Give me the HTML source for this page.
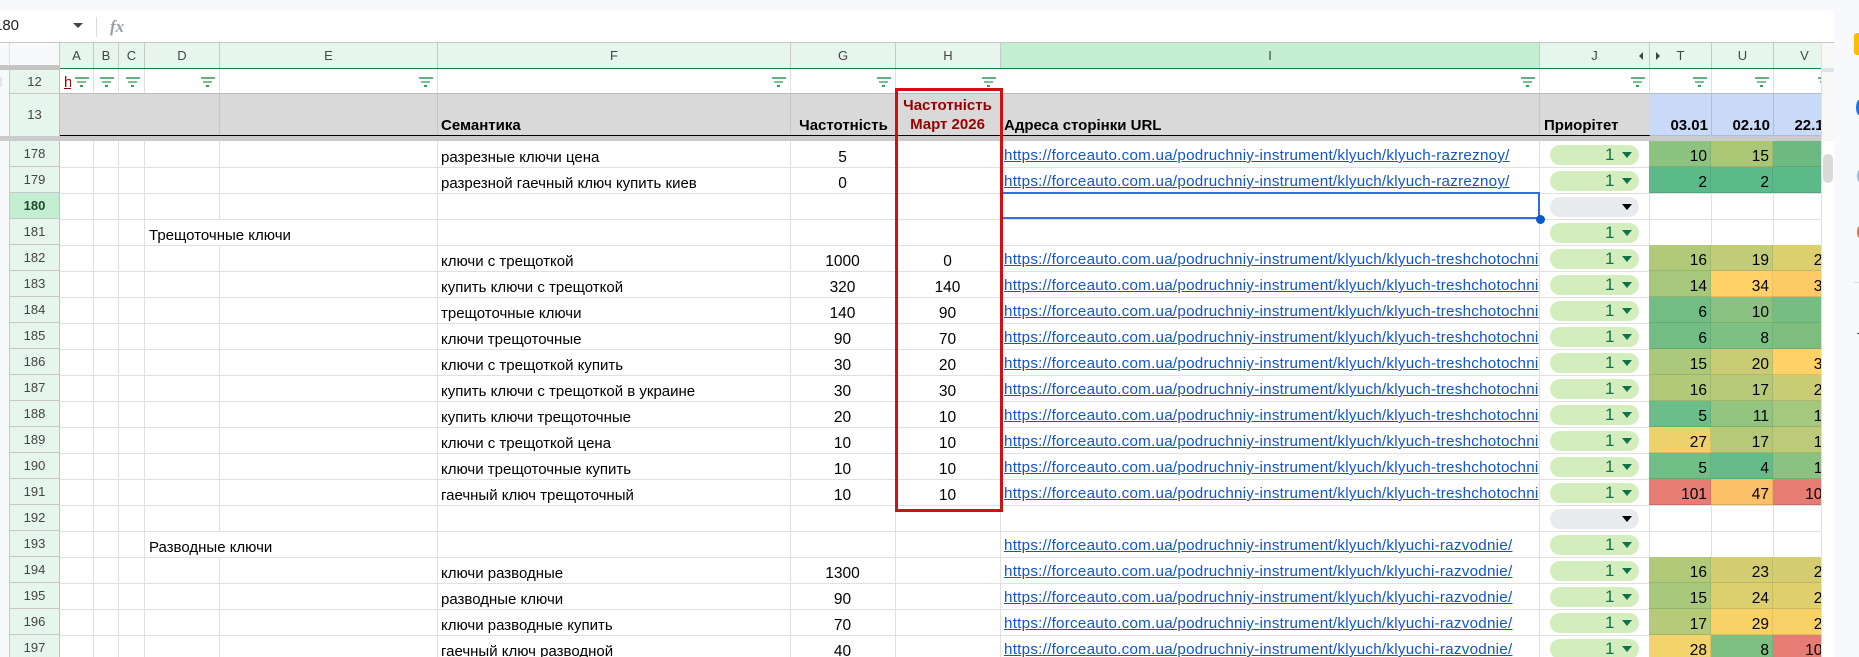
<!DOCTYPE html>
<html><head><meta charset="utf-8"><style>
html,body{margin:0;padding:0;background:#f8f9fd}
body{width:1859px;height:657px;overflow:hidden;position:relative;font-family:"Liberation Sans",Arial,sans-serif;color:#000}
div,a{position:absolute;white-space:nowrap;display:block}
#sheet{left:0;top:10px;width:1834px;height:647px;background:#fff}
#g{left:0;top:0;width:1821px;height:657px;overflow:hidden}
.hc{top:43px;height:25px;background:#e7f6ed;border-right:1px solid #c7c7c7;text-align:center;font-size:13px;line-height:25px;color:#444;box-sizing:border-box}
.fl{top:74px;width:14px;height:10px}
.fl:before{content:"";position:absolute;left:0;top:3px;width:14px;height:2px;background:#62b07f}
.fl:after{content:"";position:absolute;left:2px;top:7px;width:9px;height:2px;background:#7cc092}
.fd{top:85px;width:3px;height:2px;background:#3c9a5e}
.r{left:60px;width:1761px;height:26px;box-sizing:border-box;border-bottom:1px solid #e0e0e0}
.n{left:-60px;width:60px;height:26px}
.n div{left:9px;top:-1px;width:51px;height:26px;box-sizing:border-box;background:#e7f6ed;border-left:1px solid #c8c8c8;border-right:1px solid #c0c0c0;border-bottom:1px solid #c7c7c7;text-align:center;font-size:13px;line-height:26px;color:#444}
.f{left:381px;top:4px;font-size:15px;line-height:24px}
.d{left:88px;top:0;font-size:15px;line-height:32px;background:#fff;padding:0 4px 0 1px;width:280px;height:25px;overflow:hidden}
.g,.h{top:4px;font-size:15.5px;line-height:24px;text-align:center}
.g{left:730px;width:105px}
.h{left:835px;width:105px}
.u{left:944px;top:2px;width:535.5px;height:23px;overflow:hidden;font-size:15.2px;line-height:24px;color:#1155cc;text-decoration:underline;letter-spacing:.25px}
.p{left:1490px;top:3px;width:89px;height:20px;border-radius:10px;background:#d4edbc;color:#11734b;font-size:17px;line-height:20px}
.p span{position:absolute;left:55px;top:0}
.p:after{content:"";position:absolute;left:72px;top:7px;border-left:5px solid transparent;border-right:5px solid transparent;border-top:6px solid #11734b}
.p.e{background:#e8eaed}
.p.e:after{border-top-color:#000}
.t{top:-1px;height:26px;box-sizing:border-box;font-size:15.5px;line-height:32px;text-align:right;padding-right:3px;border-right:1px solid rgba(0,0,0,.08);border-bottom:1px solid rgba(0,0,0,.1);overflow:hidden}
.t1{left:1589px;width:62px}
.t2{left:1651px;width:62px}
.t3{left:1713px;width:62px}
.v{width:1px;background:#e0e0e0;top:141px;height:516px}
.b{font-weight:bold;font-size:15px;line-height:18px;top:117px}
</style></head><body>
<div style="left:0;top:0;width:1859px;height:10px;background:#f8f9fd"></div>
<div id="sheet"></div>
<div style="left:-6px;top:16px;font-size:15px;line-height:20px;color:#222">180</div>
<div style="left:73px;top:23px;border-left:5px solid transparent;border-right:5px solid transparent;border-top:5px solid #444"></div>
<div style="left:96px;top:17px;width:1px;height:20px;background:#dadce0"></div>
<div style="left:110px;top:17px;font:italic bold 17px/20px 'Liberation Serif',serif;color:#9aa0a6">fx</div>
<div style="left:0;top:42px;width:1834px;height:1px;background:#c7c7c7"></div>
<div style="left:1821px;top:43px;width:13px;height:98px;background:#f8f8f8"></div>
<div style="left:1821px;top:68px;width:13px;height:4px;background:#e0e3e8"></div>
<div style="left:1821px;top:43px;width:1px;height:614px;background:#e0e0e0"></div>
<div style="left:1823px;top:154px;width:10px;height:29px;border-radius:5px;background:#dadada"></div>
<div style="left:0;top:43px;width:9px;height:614px;background:#f8f9fa"></div>
<div style="left:0;top:77px;width:2px;height:10px;background:#e4e4e4"></div>
<div style="left:9px;top:43px;width:1px;height:22px;background:#e0e0e0"></div>
<div id="g">
<div class="v" style="left:93px"></div><div class="v" style="left:118px"></div><div class="v" style="left:144px"></div><div class="v" style="left:219px"></div><div class="v" style="left:437px"></div><div class="v" style="left:790px"></div><div class="v" style="left:895px"></div><div class="v" style="left:1000px"></div><div class="v" style="left:1539px"></div><div class="v" style="left:1649px"></div><div class="v" style="left:1711px"></div><div class="v" style="left:1773px"></div>
<div style="left:10px;top:43px;width:50px;height:22px;background:#f8f9fa;border-right:1px solid #c7c7c7;box-sizing:border-box"></div>
<div style="left:0;top:65px;width:60px;height:5px;background:#c4c4c4"></div>
<div class="hc" style="left:60px;width:34px">A</div><div class="hc" style="left:94px;width:25px">B</div><div class="hc" style="left:119px;width:26px">C</div><div class="hc" style="left:145px;width:75px">D</div><div class="hc" style="left:220px;width:218px">E</div><div class="hc" style="left:438px;width:353px">F</div><div class="hc" style="left:791px;width:105px">G</div><div class="hc" style="left:896px;width:105px">H</div><div class="hc" style="left:1001px;width:539px;background:#c3eed1">I</div><div class="hc" style="left:1540px;width:110px">J</div><div class="hc" style="left:1650px;width:62px">T</div><div class="hc" style="left:1712px;width:62px">U</div><div class="hc" style="left:1774px;width:62px">V</div>
<div style="left:1639px;top:52px;border-top:4px solid transparent;border-bottom:4px solid transparent;border-right:4px solid #444"></div>
<div style="left:1656px;top:52px;border-top:4px solid transparent;border-bottom:4px solid transparent;border-left:4px solid #444"></div>
<div style="left:60px;top:68px;width:1761px;height:1px;background:#188038"></div>
<!-- row 12 -->
<div style="left:9px;top:70px;width:51px;height:23px;box-sizing:border-box;background:#e7f6ed;border-left:1px solid #c8c8c8;border-right:1px solid #c0c0c0;text-align:center;font-size:13px;line-height:23px;color:#444">12</div>
<div style="left:64px;top:73px;width:7px;height:18px;overflow:hidden;font-size:15px;line-height:19px;color:#980000;text-decoration:underline">http</div>
<div style="left:60px;top:69px;width:1761px;height:24px;z-index:0">
<div style="left:33px;top:0;width:1px;height:24px;background:#e0e0e0"></div><div style="left:58px;top:0;width:1px;height:24px;background:#e0e0e0"></div><div style="left:84px;top:0;width:1px;height:24px;background:#e0e0e0"></div><div style="left:159px;top:0;width:1px;height:24px;background:#e0e0e0"></div><div style="left:377px;top:0;width:1px;height:24px;background:#e0e0e0"></div><div style="left:730px;top:0;width:1px;height:24px;background:#e0e0e0"></div><div style="left:835px;top:0;width:1px;height:24px;background:#e0e0e0"></div><div style="left:1479px;top:0;width:1px;height:24px;background:#e0e0e0"></div><div style="left:1589px;top:0;width:1px;height:24px;background:#e0e0e0"></div><div style="left:1651px;top:0;width:1px;height:24px;background:#e0e0e0"></div><div style="left:1713px;top:0;width:1px;height:24px;background:#e0e0e0"></div>
</div>
<div class="fl" style="left:75px"></div><div class="fd" style="left:80px"></div>
<div class="fl" style="left:100px"></div><div class="fd" style="left:105px"></div>
<div class="fl" style="left:126px"></div><div class="fd" style="left:131px"></div>
<div class="fl" style="left:201px"></div><div class="fd" style="left:206px"></div>
<div class="fl" style="left:419px"></div><div class="fd" style="left:424px"></div>
<div class="fl" style="left:772px"></div><div class="fd" style="left:777px"></div>
<div class="fl" style="left:877px"></div><div class="fd" style="left:882px"></div>
<div class="fl" style="left:982px"></div><div class="fd" style="left:987px"></div>
<div class="fl" style="left:1521px"></div><div class="fd" style="left:1526px"></div>
<div class="fl" style="left:1631px"></div><div class="fd" style="left:1636px"></div>
<div class="fl" style="left:1693px"></div><div class="fd" style="left:1698px"></div>
<div class="fl" style="left:1755px"></div><div class="fd" style="left:1760px"></div>
<div class="fl" style="left:1818px"></div>
<!-- row 13 -->
<div style="left:9px;top:93px;width:51px;height:43px;box-sizing:border-box;background:#e7f6ed;border-left:1px solid #c8c8c8;border-right:1px solid #c0c0c0;border-top:1px solid #c7c7c7;text-align:center;font-size:13px;line-height:41px;color:#444">13</div>
<div style="left:60px;top:93px;width:1590px;height:42px;background:#d9d9d9;border-top:1px solid #bdbdbd;box-sizing:border-box"></div>
<div style="left:1650px;top:93px;width:171px;height:42px;background:#c9daf8;border-top:1px solid #b0bdd3;box-sizing:border-box"></div>
<div style="left:219px;top:94px;width:1px;height:41px;background:#c4c4c4"></div><div style="left:437px;top:94px;width:1px;height:41px;background:#c4c4c4"></div><div style="left:790px;top:94px;width:1px;height:41px;background:#c4c4c4"></div><div style="left:895px;top:94px;width:1px;height:41px;background:#c4c4c4"></div><div style="left:1539px;top:94px;width:1px;height:41px;background:#c4c4c4"></div><div style="left:1711px;top:94px;width:1px;height:41px;background:#a9bddc"></div><div style="left:1773px;top:94px;width:1px;height:41px;background:#a9bddc"></div>
<div class="b" style="left:441px">Семантика</div>
<div class="b" style="left:791px;width:105px;text-align:center">Частотність</div>
<div class="b" style="left:895px;width:105px;text-align:center;top:97px;line-height:18.5px;color:#980000">Частотність<br>Март 2026</div>
<div class="b" style="left:1004px">Адреса сторінки URL</div>
<div class="b" style="left:1544px">Приорітет</div>
<div class="b" style="left:1650px;width:58px;text-align:right">03.01</div>
<div class="b" style="left:1712px;width:58px;text-align:right">02.10</div>
<div class="b" style="left:1774px;width:58px;text-align:right">22.10</div>
<div style="left:60px;top:135px;width:1590px;height:1px;background:#000"></div>
<div style="left:0;top:136px;width:1821px;height:5px;background:#cbcbcb"></div>
<div style="left:1650px;top:135px;width:171px;height:1px;background:#a9bddc"></div>
<!-- rows -->
<div class="r" style="top:142px"><div class="n"><div>178</div></div><div class="f">разрезные ключи цена</div><div class="g">5</div><a class="u">https://forceauto.com.ua/podruchniy-instrument/klyuch/klyuch-razreznoy/</a><div class="p"><span>1</span></div><div class="t t1" style="background:#8cc37f">10</div><div class="t t2" style="background:#abc776">15</div><div class="t t3" style="background:#6cb982">5</div></div>
<div class="r" style="top:168px"><div class="n"><div>179</div></div><div class="f">разрезной гаечный ключ купить киев</div><div class="g">0</div><a class="u">https://forceauto.com.ua/podruchniy-instrument/klyuch/klyuch-razreznoy/</a><div class="p"><span>1</span></div><div class="t t1" style="background:#5cb98a">2</div><div class="t t2" style="background:#5cb98a">2</div><div class="t t3" style="background:#5cb98a">2</div></div>
<div class="r" style="top:194px"><div class="n"><div style="background:#c3eed1;font-weight:bold;color:#1e4d2b">180</div></div><div class="p e"></div></div>
<div class="r" style="top:220px"><div class="n"><div>181</div></div><div class="d">Трещоточные ключи</div><div class="p"><span>1</span></div></div>
<div class="r" style="top:246px"><div class="n"><div>182</div></div><div class="f">ключи с трещоткой</div><div class="g">1000</div><div class="h">0</div><a class="u">https://forceauto.com.ua/podruchniy-instrument/klyuch/klyuch-treshchotochni</a><div class="p"><span>1</span></div><div class="t t1" style="background:#b0ca7a">16</div><div class="t t2" style="background:#c2cb77">19</div><div class="t t3" style="background:#dccf6e">24</div></div>
<div class="r" style="top:272px"><div class="n"><div>183</div></div><div class="f">купить ключи с трещоткой</div><div class="g">320</div><div class="h">140</div><a class="u">https://forceauto.com.ua/podruchniy-instrument/klyuch/klyuch-treshchotochni</a><div class="p"><span>1</span></div><div class="t t1" style="background:#a6c87c">14</div><div class="t t2" style="background:#ffd166">34</div><div class="t t3" style="background:#fdca66">35</div></div>
<div class="r" style="top:298px"><div class="n"><div>184</div></div><div class="f">трещоточные ключи</div><div class="g">140</div><div class="h">90</div><a class="u">https://forceauto.com.ua/podruchniy-instrument/klyuch/klyuch-treshchotochni</a><div class="p"><span>1</span></div><div class="t t1" style="background:#72bd84">6</div><div class="t t2" style="background:#8cc281">10</div><div class="t t3" style="background:#76bd83">7</div></div>
<div class="r" style="top:324px"><div class="n"><div>185</div></div><div class="f">ключи трещоточные</div><div class="g">90</div><div class="h">70</div><a class="u">https://forceauto.com.ua/podruchniy-instrument/klyuch/klyuch-treshchotochni</a><div class="p"><span>1</span></div><div class="t t1" style="background:#72bd84">6</div><div class="t t2" style="background:#7ebf82">8</div><div class="t t3" style="background:#7dbe7f">8</div></div>
<div class="r" style="top:350px"><div class="n"><div>186</div></div><div class="f">ключи с трещоткой купить</div><div class="g">30</div><div class="h">20</div><a class="u">https://forceauto.com.ua/podruchniy-instrument/klyuch/klyuch-treshchotochni</a><div class="p"><span>1</span></div><div class="t t1" style="background:#abc87b">15</div><div class="t t2" style="background:#c9cb75">20</div><div class="t t3" style="background:#ffd166">31</div></div>
<div class="r" style="top:376px"><div class="n"><div>187</div></div><div class="f">купить ключи с трещоткой в украине</div><div class="g">30</div><div class="h">30</div><a class="u">https://forceauto.com.ua/podruchniy-instrument/klyuch/klyuch-treshchotochni</a><div class="p"><span>1</span></div><div class="t t1" style="background:#b0ca7a">16</div><div class="t t2" style="background:#b6c979">17</div><div class="t t3" style="background:#c9cb75">20</div></div>
<div class="r" style="top:402px"><div class="n"><div>188</div></div><div class="f">купить ключи трещоточные</div><div class="g">20</div><div class="h">10</div><a class="u">https://forceauto.com.ua/podruchniy-instrument/klyuch/klyuch-treshchotochni</a><div class="p"><span>1</span></div><div class="t t1" style="background:#6cbd87">5</div><div class="t t2" style="background:#93c480">11</div><div class="t t3" style="background:#a3c87e">13</div></div>
<div class="r" style="top:428px"><div class="n"><div>189</div></div><div class="f">ключи с трещоткой цена</div><div class="g">10</div><div class="h">10</div><a class="u">https://forceauto.com.ua/podruchniy-instrument/klyuch/klyuch-treshchotochni</a><div class="p"><span>1</span></div><div class="t t1" style="background:#edd26b">27</div><div class="t t2" style="background:#b6c979">17</div><div class="t t3" style="background:#bdca77">18</div></div>
<div class="r" style="top:454px"><div class="n"><div>190</div></div><div class="f">ключи трещоточные купить</div><div class="g">10</div><div class="h">10</div><a class="u">https://forceauto.com.ua/podruchniy-instrument/klyuch/klyuch-treshchotochni</a><div class="p"><span>1</span></div><div class="t t1" style="background:#6fbf87">5</div><div class="t t2" style="background:#66bc88">4</div><div class="t t3" style="background:#8cc281">10</div></div>
<div class="r" style="top:480px"><div class="n"><div>191</div></div><div class="f">гаечный ключ трещоточный</div><div class="g">10</div><div class="h">10</div><a class="u">https://forceauto.com.ua/podruchniy-instrument/klyuch/klyuch-treshchotochni</a><div class="p"><span>1</span></div><div class="t t1" style="background:#e67c73">101</div><div class="t t2" style="background:#fbbf68">47</div><div class="t t3" style="background:#e67c73">101</div></div>
<div class="r" style="top:506px"><div class="n"><div>192</div></div><div class="p e"></div></div>
<div class="r" style="top:532px"><div class="n"><div>193</div></div><div class="d">Разводные ключи</div><a class="u">https://forceauto.com.ua/podruchniy-instrument/klyuch/klyuchi-razvodnie/</a><div class="p"><span>1</span></div></div>
<div class="r" style="top:558px"><div class="n"><div>194</div></div><div class="f">ключи разводные</div><div class="g">1300</div><a class="u">https://forceauto.com.ua/podruchniy-instrument/klyuch/klyuchi-razvodnie/</a><div class="p"><span>1</span></div><div class="t t1" style="background:#b0ca7a">16</div><div class="t t2" style="background:#d4cd72">23</div><div class="t t3" style="background:#d4cd72">23</div></div>
<div class="r" style="top:584px"><div class="n"><div>195</div></div><div class="f">разводные ключи</div><div class="g">90</div><a class="u">https://forceauto.com.ua/podruchniy-instrument/klyuch/klyuchi-razvodnie/</a><div class="p"><span>1</span></div><div class="t t1" style="background:#a8c97c">15</div><div class="t t2" style="background:#dccf6e">24</div><div class="t t3" style="background:#dfd06d">25</div></div>
<div class="r" style="top:610px"><div class="n"><div>196</div></div><div class="f">ключи разводные купить</div><div class="g">70</div><a class="u">https://forceauto.com.ua/podruchniy-instrument/klyuch/klyuchi-razvodnie/</a><div class="p"><span>1</span></div><div class="t t1" style="background:#b6cb79">17</div><div class="t t2" style="background:#f9d267">29</div><div class="t t3" style="background:#f9d267">29</div></div>
<div class="r" style="top:636px"><div class="n"><div>197</div></div><div class="f">гаечный ключ разводной</div><div class="g">40</div><a class="u">https://forceauto.com.ua/podruchniy-instrument/klyuch/klyuchi-razvodnie/</a><div class="p"><span>1</span></div><div class="t t1" style="background:#f3d36b">28</div><div class="t t2" style="background:#7ebf82">8</div><div class="t t3" style="background:#e67c73">101</div></div>
<!-- selection -->
<div style="left:1000px;top:192px;width:540px;height:27px;box-sizing:border-box;border:2px solid #2f6fe0;border-left:1px solid #2f6fe0"></div>
<div style="left:1536px;top:215px;width:9px;height:9px;border-radius:50%;background:#0b57d0"></div>
<!-- red box -->
<div style="left:895px;top:88px;width:108px;height:424px;box-sizing:border-box;border:3px solid #d40f14"></div>
</div>
<!-- right rail -->
<div style="left:1854px;top:33px;width:5px;height:22px;background:#fbbc04;border-radius:3px 0 0 3px"></div>
<div style="left:1856px;top:100px;width:6px;height:15px;background:#1a73e8;border-radius:50%"></div>
<div style="left:1857px;top:170px;width:5px;height:12px;background:#9db4ee;border-radius:50%"></div>
<div style="left:1857px;top:226px;width:5px;height:12px;background:#e8743b;border-radius:50%"></div>
<div style="left:1854px;top:282px;width:5px;height:1px;background:#dadce0"></div>
<div style="left:1857px;top:333px;width:2px;height:1px;background:#444"></div>
</body></html>
